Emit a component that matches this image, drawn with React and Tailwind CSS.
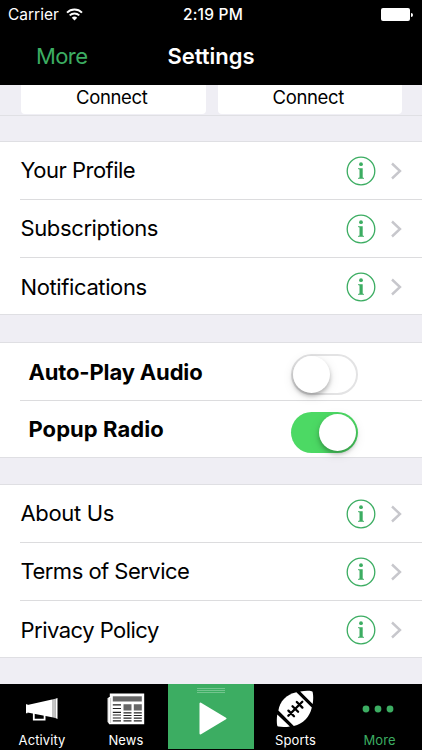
import clsx from 'clsx'

const profileLinks = [
  { label: 'Your Profile', tracking: 'tracking-[-0.5px]' },
  { label: 'Subscriptions', tracking: 'tracking-[-0.38px]' },
  { label: 'Notifications', tracking: 'tracking-[-0.38px]' },
]

const aboutLinks = [
  { label: 'About Us', tracking: 'tracking-[-0.35px]' },
  { label: 'Terms of Service', tracking: 'tracking-[-0.52px]' },
  { label: 'Privacy Policy', tracking: 'tracking-[-0.52px]' },
]

function StatusBar() {
  return (
    <div className="grid h-[29px] grid-cols-3 items-center px-2 pt-px text-[15.5px] leading-none">
      <div className="flex items-center gap-[7px]">
        <span>Carrier</span>
        <svg className="-mt-px" width="17" height="13" viewBox="0 0 17 13" fill="none" stroke="white" strokeWidth="1.9">
          <path d="M1 4.6C5.2.5 11.8.5 16 4.6" />
          <path d="M3.7 7.4c2.7-2.6 6.9-2.6 9.6 0" />
          <path d="M8.5 12.4 5.8 9.7c1.5-1.5 3.9-1.5 5.4 0Z" fill="white" stroke="none" />
        </svg>
      </div>
      <span className="pl-1 text-center font-medium tracking-[0.2px]">2:19 PM</span>
      <div className="-mt-px flex items-center justify-end pr-px">
        <span className="h-[13px] w-[29px] rounded-[2px] bg-white" />
        <span className="ml-px h-1 w-[1.5px] rounded-r-full bg-white" />
      </div>
    </div>
  )
}

function Header() {
  return (
    <header className="h-[85px] shrink-0 bg-black text-white">
      <StatusBar />
      <div className="grid h-[56px] grid-cols-[1fr_auto_1fr] items-center pb-px">
        <span className="pl-9 text-[22px] tracking-[-0.6px] text-[#3cad62]">More</span>
        <h1 className="text-[22px] font-semibold tracking-[0px]">Settings</h1>
        <span />
      </div>
    </header>
  )
}

function ConnectButtons() {
  return (
    <div className="flex h-[31px] shrink-0 gap-3 border-b border-[#e0e0e4] pr-5 pl-[21px]">
      {['left', 'right'].map((side) => (
        <button
          key={side}
          className="h-[29px] flex-1 rounded-b-[4px] bg-white pr-[3px] pb-[5px] text-[18.5px] leading-6 tracking-[-0.35px]"
        >
          Connect
        </button>
      ))}
    </div>
  )
}

function InfoIcon() {
  return (
    <svg width="30" height="30" viewBox="0 0 30 30" fill="#3cad62">
      <circle cx="15" cy="15" r="13.8" fill="none" stroke="#3cad62" strokeWidth="1.3" />
      <circle cx="15" cy="8.2" r="1.9" />
      <path d="M12 12.3h4.7v9.3l1.3.5v.7h-6v-.7l1.5-.5v-8l-1.5-.5Z" />
    </svg>
  )
}

function LinkRow({ label, tracking, last }) {
  return (
    <div className="flex h-[58px] pl-5">
      <div className={clsx('flex flex-1 items-center pr-[19px]', !last && 'border-b border-[#dcdcde]')}>
        <span className={clsx('flex-1 pl-[0.5px] text-[22px]', tracking)}>{label}</span>
        <InfoIcon />
        <svg className="ml-[14px]" width="13" height="18" viewBox="0 0 13 18" fill="none" stroke="#c7c7cc" strokeWidth="2.4">
          <path d="M2 1.5 10 9l-8 7.5" />
        </svg>
      </div>
    </div>
  )
}

function LinkGroup({ items }) {
  return (
    <section className="h-[174px] shrink-0 border-y border-[#dfdfe3] bg-white">
      {items.map((item, i) => (
        <LinkRow key={item.label} {...item} last={i === items.length - 1} />
      ))}
    </section>
  )
}

function Switch({ on }) {
  return (
    <div
      className={clsx(
        'flex h-[41px] w-[67px] items-center rounded-full',
        on ? 'justify-end bg-[#4cd964] pr-[2px]' : 'border-2 border-[#e3e3e4] bg-white'
      )}
    >
      <span className="size-[37px] rounded-full bg-white shadow-[0_3px_4px_rgba(0,0,0,0.25),0_3px_12px_rgba(0,0,0,0.1)]" />
    </div>
  )
}

function SwitchRow({ label, tracking, on, last }) {
  return (
    <div className="flex h-[58px] pl-5">
      <div className={clsx('flex flex-1 items-center pr-16 pl-2', !last && 'border-b border-[#dcdcde]')}>
        <span className={clsx('flex-1 pl-[0.5px] text-[22px] font-bold', !last && 'pt-px', last && 'pb-px', tracking)}>
          {label}
        </span>
        <div className="pt-[5px]">
          <Switch on={on} />
        </div>
      </div>
    </div>
  )
}

function MegaphoneIcon() {
  return (
    <svg className="mt-0.5" width="34" height="25" viewBox="0 0 34 25">
      <path d="M8.8 15v6.6h10.8v-5" fill="none" stroke="white" strokeWidth="1.8" />
      <path d="M1 6.2h1.5v.7L27 1.5v17.8L2.5 14.5v.7H1Z" fill="white" />
      <path d="M27 1.5 30.4.7v19.4l-3.4-.8Z" fill="#c4c4c4" />
      <path d="M30.4.7 32.5 0v21l-2.1-.9Z" fill="white" />
    </svg>
  )
}

function NewspaperIcon() {
  return (
    <svg width="38" height="32" viewBox="0 0 38 32">
      <path d="M.5 5h1.8v25.5L.5 29Z" fill="#ddd" />
      <path d="M2.8.5h34.4v30.8H2.2l-.6-1V4h1.2Z" fill="white" />
      <path d="M5.8 3.3h29v5.2h-29Z" fill="#666" />
      <path d="M5.8 11.8H14M5.8 15.5H14M5.8 19.3H14M5.8 22H14M5.8 25H14M5.8 27.8H14M16.5 19.8h8M16.5 22.5h8M16.5 25.2h8M16.5 27.8h8M26.8 19.8h8M26.8 22.5h8M26.8 25.2h8M26.8 27.8h8" stroke="#222" strokeWidth="1.2" />
      <path d="M16.5 11.2h8v6.3h-8ZM26.8 11.2h8v6.3h-8Z" fill="#666" />
      <path d="M3.6 5v25" stroke="#aaa" strokeWidth=".6" />
    </svg>
  )
}

function FootballIcon() {
  return (
    <svg className="-ml-[2px]" width="38" height="38" viewBox="0 0 38 38">
      <path d="M24.2 1.6C29 .6 33 .7 35.6 1.2c.7.1 1 .5 1.1 1.1.7 3.5.7 7.5 0 11.7Z" fill="white" />
      <path d="M1.3 24.4C.6 28.5.7 32.5 1.2 35.4c.1.7.5 1.1 1.2 1.2 3.5.6 7.5.6 11.5-.1Z" fill="white" />
      <path d="M20.4 2.2 35.8 17.6C33.8 27 27 34 17.8 36L2.4 20.6C3.6 11.5 10.5 4.2 20.4 2.2Z" fill="white" />
      <path d="m12.3 25.7 14-14M12.4 20.6l5.6 5.6M16.5 16.2l5.6 5.6M20.8 12l5.6 5.6" stroke="black" strokeWidth="2.3" strokeLinecap="round" />
    </svg>
  )
}

function MoreIcon() {
  return (
    <svg className="-ml-[3px]" width="32" height="8" viewBox="0 0 32 8" fill="#3cad62">
      <circle cx="4" cy="4" r="3.4" />
      <circle cx="16" cy="4" r="3.4" />
      <circle cx="28" cy="4" r="3.4" />
    </svg>
  )
}

function Tab({ label, icon, active }) {
  return (
    <div className={clsx('flex w-[84px] flex-col items-center', active ? 'text-[#3cad62]' : 'text-white')}>
      <div className="flex h-[49px] items-center justify-center pt-px">{icon}</div>
      <span className="text-[13px] leading-[15px] tracking-[0.1px]">{label}</span>
    </div>
  )
}

function TabBar() {
  return (
    <nav className="flex h-[66px] shrink-0 bg-black">
      <Tab label="Activity" icon={<MegaphoneIcon />} />
      <Tab label="News" icon={<NewspaperIcon />} />
      <div className="flex h-[65px] w-[85.5px] flex-col items-center bg-[#3cad62] pt-1">
        <div className="flex w-7 flex-col gap-px">
          <span className="h-px bg-[#73c58e]" />
          <span className="h-px bg-[#73c58e]" />
          <span className="h-px bg-[#73c58e]" />
        </div>
        <svg className="mt-[9px] ml-[4px]" width="28" height="33" viewBox="0 0 28 33">
          <path d="M1.5 1.5v30L26.5 16.5Z" fill="white" stroke="white" strokeWidth="2" strokeLinejoin="round" />
        </svg>
      </div>
      <Tab label="Sports" icon={<FootballIcon />} />
      <Tab label="More" icon={<MoreIcon />} active />
    </nav>
  )
}

export default function App() {
  return (
    <div className="flex h-[750px] w-[422px] flex-col overflow-hidden bg-[#efeef4] font-['Inter',sans-serif] text-black">
      <Header />
      <ConnectButtons />
      <main className="flex flex-1 flex-col pt-[25px]">
        <LinkGroup items={profileLinks} />
        <section className="mt-[27px] mb-[26px] h-[116px] shrink-0 border-y border-[#dfdfe3] bg-white">
          <SwitchRow label="Auto-Play Audio" tracking="tracking-[-0.15px]" />
          <SwitchRow label="Popup Radio" tracking="tracking-[0.05px]" on last />
        </section>
        <LinkGroup items={aboutLinks} />
      </main>
      <TabBar />
    </div>
  )
}
